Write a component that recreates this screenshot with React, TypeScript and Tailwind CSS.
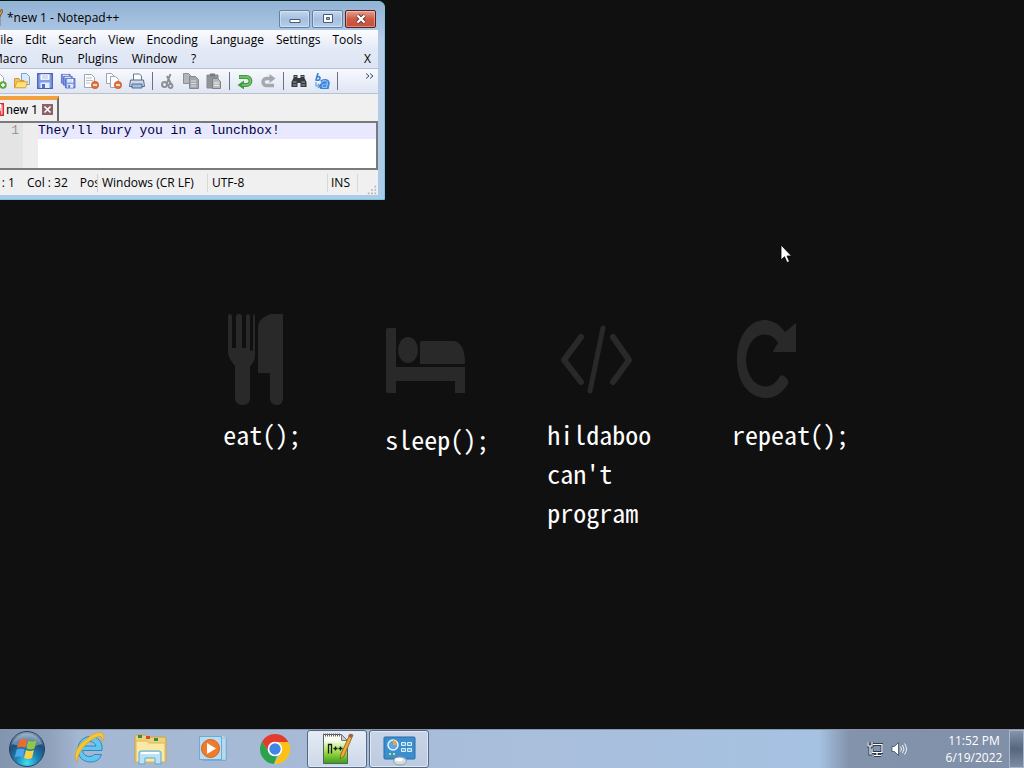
import type { ReactNode } from "react"

const MENU_TOP = ["File", "Edit", "Search", "View", "Encoding", "Language", "Settings", "Tools"]
const MENU_BOTTOM = ["Macro", "Run", "Plugins", "Window", "?"]

const Page = ({ x = 3, y = 1, w = 10, h = 13, fill = "#fdfdfd", stroke = "#9aa6b8" }) =>
    <path d={`M${x + 0.5} ${y + 0.5}h${w - 4}l3 3v${h - 4}h-${w - 1}z`} fill={fill} stroke={stroke} />

const Minus = () => <>
    <circle cx="12" cy="12" r="3.7" fill="#e0703a" stroke="#c4552a" strokeWidth=".6" />
    <path d="M10 12h4" stroke="#fff" strokeWidth="1.5" />
</>

const Floppy = ({ x = 0, y = 0, s = 1 }) => <g transform={`translate(${x} ${y}) scale(${s})`}>
    <path d="M.7.7h14.6v14.6H.7z" fill="#7f9fe8" stroke="#4a62b8" strokeWidth="1.3" />
    <path d="M3.5 1.3h9v5.5h-9z" fill="#fff" />
    <path d="M5 3h6M5 5h6" stroke="#a8b8e0" />
    <path d="M3.5 9.5h9v5.5h-9z" fill="#e8eefc" />
    <path d="M5 11h3v4H5z" fill="#4d70cc" />
</g>

type Tool = { name: string, icon: ReactNode } | null

const TOOLS: Tool[] = [
    { name: "New", icon: <><Page /><circle cx="12" cy="12" r="3.7" fill="#5aa83c" /><path d="M10 12h4M12 10v4" stroke="#fff" strokeWidth="1.4" /></> },
    { name: "Open", icon: <><path d="M7.5.5h5l3 3v8h-8z" fill="#dce9fb" stroke="#7f9ed2" /><path d="M.5 14.5V5.5H5l1 2h4v7z" fill="#f2c455" stroke="#d39a2e" /><path d="M.8 14.8 3 8.7h10.5l-1.8 6.1z" fill="#ffe07c" stroke="#dba438" /></> },
    { name: "Save", icon: <Floppy /> },
    { name: "Save All", icon: <><Floppy x={1} y={1} s={0.6} /><Floppy x={3} y={3} s={0.6} /><Floppy x={5} y={5} s={0.65} /></> },
    { name: "Close", icon: <><Page x={1} w={11} h={14} /><path d="M3 5h6M3 7.5h7M3 10h4" stroke="#b7becb" /><Minus /></> },
    { name: "Close All", icon: <><Page x={0} y={0} w={9} h={11} /><Page x={4} y={3} w={9} h={12} /><Minus /></> },
    { name: "Print", icon: <><path d="M4.5 7V1h6l2 2v4" fill="#fff" stroke="#64799a" /><path d="M1.5 7h13l1 6.5H.5z" fill="#cfd8e5" stroke="#566a8c" /><path d="M3 11h10v4H3z" fill="#9ebfe8" stroke="#566a8c" /></> },
    null,
    { name: "Cut", icon: <><path d="M10.5 1 7 10M7 3l4 8" stroke="#8b8f96" strokeWidth="2" fill="none" /><circle cx="4.5" cy="11.5" r="2.5" fill="none" stroke="#8b8f96" strokeWidth="2" /><circle cx="10.5" cy="13" r="2" fill="none" stroke="#8b8f96" strokeWidth="1.8" /></> },
    { name: "Copy", icon: <><Page x={0} y={0} w={9} h={11} fill="#b4b6ba" stroke="#8b8e94" /><Page x={6} y={3} w={10} h={13} fill="#a4a6ab" stroke="#85888e" /><path d="M8 8h5M8 10.5h5M8 13h5" stroke="#e2e2e4" /></> },
    { name: "Paste", icon: <><path d="M1 2h11v13H1z" fill="#919499" stroke="#85888e" /><path d="M4 .5h5v3H4z" fill="#777a80" /><Page x={6} y={5} w={9} h={11} fill="#b7b9bd" stroke="#7e8187" /><path d="M8 10h5M8 12.5h5" stroke="#eee" /></> },
    null,
    { name: "Undo", icon: <><path d="M2 4h7.500a4 4 0 0 1 0 8H6" fill="none" stroke="#3f9c40" strokeWidth="3.8" /><path d="M7 7.500v9L.5 12z" fill="#3f9c40" /><path d="M2.5 4h7a4 4 0 0 1 0 8H5" fill="none" stroke="#7bc96c" strokeWidth="1.6" /></> },
    { name: "Redo", icon: <><path d="M11 5.500H6.500a3.500 3.500 0 0 0 0 7H14" fill="none" stroke="#a5a7ab" strokeWidth="3.4" /><path d="M9.500 1v9L15.500 5.500z" fill="#a5a7ab" /></> },
    null,
    { name: "Find", icon: <><path d="M2.5 2h4v3h3V2h4v3l2 4v5H9.5v-4h-3v4H.5V9l2-4z" fill="#37393f" /><path d="M3.5 3.5h2M10.5 3.5h2M2 9h3.5M10.5 9H14M2 12h3.5M10.5 12H14" stroke="#a0a5b0" /></> },
    { name: "Replace", icon: <>
        <path d="M4 0 2 7q4 1 4-2 0-2-3-1" fill="none" stroke="#3c81cf" strokeWidth="1.6" />
        <path d="M2 9v4h4M4 11l2 2-2 2" fill="none" stroke="#5ba0e4" strokeWidth="1.2" />
        <path d="M7 9q6-3 7 1l-1 5H8q-3-4 5-4" fill="none" stroke="#3f83d8" strokeWidth="3.600" />
        <path d="M7.500 9q5-3 6 1l-1 4.500H9q-3-3.500 4-3.500" fill="none" stroke="#8dc1f5" strokeWidth="1.200" />
    </> },
    null,
]

const CaptionButton = ({ label, close, children }: { label: string, close?: boolean, children: ReactNode }) =>
    <button aria-label={label} className={`flex h-[18px] w-[31px] items-center justify-center rounded-[2px] border ${close
        ? "border-[#5c1f1c] bg-linear-to-b from-[#e2a08f] via-[#cf5a45] to-[#c4513c]"
        : "border-[#6580a2] bg-linear-to-b from-[#c4d8ee] via-[#a5bfde] to-[#b6cfea]"} shadow-[inset_0_0_0_1px_rgba(255,255,255,0.35)]`}>
        <svg width="14" height="12" viewBox="0 0 14 12" fill="none">{children}</svg>
    </button>

const NotepadWindow = () =>
    <section className="absolute -left-6 top-px flex h-[199px] w-[409px] flex-col rounded-tr-md border border-[#7ec4dc] bg-linear-to-b from-[#93b2d4] via-[#b4cde9] via-20% to-[#a9cce8] px-[6px] pb-1 font-['Open_Sans','Noto_Sans',sans-serif] text-[12px] text-black">
        <header className="flex h-7 shrink-0 items-center pr-[2px]">
            <svg className="ml-1 mt-1" width="16" height="18" viewBox="0 0 16 18">
                <path d="M1 2h12v15H1z" fill="#dff0cf" stroke="#777" />
                <path d="M14.5 0 7 14l-.5 3 2.5-2L16 2z" fill="#d99a36" stroke="#5a4a2a" strokeWidth=".8" />
            </svg>
            <h1 className="mt-1 pl-1 text-[12px]">*new 1 - Notepad++</h1>
            <div className="ml-auto flex gap-[2px] pt-[5px]">
                <CaptionButton label="Minimize"><path d="M2 6.5h10v3H2z" fill="#fff" stroke="#4a5b75" /></CaptionButton>
                <CaptionButton label="Maximize"><path d="M2.5 1.5h9v8h-9z" fill="#fff" stroke="#4a5b75" /><path d="M5.5 4.5h3v2h-3z" fill="#a5bfde" stroke="#4a5b75" /></CaptionButton>
                <CaptionButton label="Close" close><path d="m3.500 2.500 7 7m0-7-7 7" stroke="#5a3538" strokeWidth="4" /><path d="m3.500 2.500 7 7m0-7-7 7" stroke="#fff" strokeWidth="2.4" /></CaptionButton>
            </div>
        </header>

        <div className="flex min-h-0 grow flex-col bg-[#f0f0f0]">
            <nav className="shrink-0 bg-linear-to-b from-[#fbfcfe] via-[#e3e9f6] to-[#dde4f3]">
                <div className="flex h-[19px] items-center gap-3 pl-[11px]">
                    {MENU_TOP.map(item => <button key={item}>{item}</button>)}
                </div>
                <div className="flex h-[19px] items-center gap-[14px] pl-[9px]">
                    {MENU_BOTTOM.map(item => <button key={item}>{item}</button>)}
                    <button className="ml-auto pr-[7px]" aria-label="Close document">X</button>
                </div>
            </nav>

            <div className="flex h-[26px] shrink-0 border-y border-t-[#b4bfd2] border-b-[#b9c1cf] bg-linear-to-b from-[#f7f9fd] to-[#dfe5f2] pl-1">
                {TOOLS.map((tool, i) => tool
                    ? <button key={i} aria-label={tool.name} className="flex w-[23px] items-center justify-center">
                        <svg width="16" height="16" viewBox="0 0 16 16">{tool.icon}</svg>
                    </button>
                    : <span key={i} className="flex w-2 items-center justify-center"><i className="h-[18px] w-px bg-[#66728c]" /></span>)}
                <button aria-label="More tools" className="ml-auto flex pr-1 pt-1">
                    <svg width="9" height="7" viewBox="0 0 9 7" fill="none" stroke="#3d4a66"><path d="m1 .5 3 2.500-3 2.500M5 .5l3 2.500-3 2.500" /></svg>
                </button>
            </div>

            <div className="flex h-[27px] shrink-0 items-end">
                <button className="flex h-[25px] w-[76px] items-center justify-end gap-1 border-r-2 border-t-4 border-r-[#6b6b6b] border-t-[#f0a03c] pr-1 pb-[2px] font-['Roboto',sans-serif] text-[12px]">
                    <svg className="shrink-0" width="12" height="13" viewBox="0 0 12 13"><path d="M.7.7h10.600v11.600H.7z" fill="#f6b5b5" stroke="#d42c36" strokeWidth="1.4" /><path d="M3 1h6v4H3z" fill="#fff" /><path d="M3 8h6v4H3z" fill="#e0424c" /></svg>
                    <span className="-ml-[2px] whitespace-nowrap">new 1</span>
                    <svg className="shrink-0" width="11" height="11" viewBox="0 0 11 11"><path d="M0 0h11v11H0z" fill="#8d6168" /><path d="m2.500 2.500 6 6m0-6-6 6" stroke="#fff" strokeWidth="1.6" /></svg>
                </button>
            </div>

            <div className="flex min-h-0 grow border-2 border-l-0 border-[#7a7a7a] bg-white font-['Liberation_Mono',monospace] text-[13px] leading-4">
                <span className="w-10 shrink-0 bg-[#e4e4e4] pr-1 text-right text-[#989898]">1</span>
                <span className="w-[15px] shrink-0 bg-[#ededed]" />
                <textarea aria-label="Editor" spellCheck={false} defaultValue="They'll bury you in a lunchbox!" className="grow resize-none bg-[linear-gradient(#e8e8ff_16px,#ffffff_16px)] p-0 text-[#000040] outline-none" />
            </div>

            <footer className="flex h-[25px] shrink-0 items-center whitespace-nowrap pt-px">
                <div className="flex w-[115px] justify-end gap-3 overflow-hidden border-r border-[#d0d0d0]">
                    <span>Ln : 1</span>
                    <span>Col : 32</span>
                    <span className="-mr-[3px]">Pos</span>
                </div>
                <span className="w-[110px] border-r border-[#d8d8d8] pl-1">Windows (CR LF)</span>
                <span className="w-[120px] border-r border-[#d8d8d8] pl-1">UTF-8</span>
                <span className="w-[30px] border-r border-[#d8d8d8] pl-[3px]">INS</span>
                <svg className="ml-auto mr-px self-end" width="10" height="10" viewBox="0 0 12 12" fill="#b3b3b3"><path d="M9 1h2v2H9zM9 5h2v2H9zM9 9h2v2H9zM5 5h2v2H5zM5 9h2v2H5zM1 9h2v2H1z" /></svg>
            </footer>
        </div>
    </section>

const STEPS = [
    { text: "eat();", icon: <svg className="ml-1" width="58" height="94" viewBox="0 0 58 94" fill="#292929">
        <path d="M3 1q2 0 2 3v31h4V4q0-3 3-3t3 3v31h4V4q0-3 2-3t2 3v34q5-2 3-1V4q0-3 1-3t1 3v38q0 7-5 11v32q0 7-7 7-8 0-8-7V53Q2 46 1 40V4q0-3 2-3z" />
        <path d="M44 1h12v84q0 7-6 7-7 0-7-7V60H31V15q0-10 13-14z" />
    </svg> },
    { text: "sleep();", icon: <svg className="mt-[14px]" width="82" height="68" viewBox="0 0 82 68" fill="#292929">
        <path d="M1 3q0-2 2-2h8v39h69v26H70V54H11v12H3q-2 0-2-2z" />
        <ellipse cx="23" cy="23" rx="10" ry="13" />
        <path d="M37 14h32q11 2 11 23H35V16q0-2 2-2z" />
    </svg> },
    { text: "hildaboo can't program", icon: <svg className="ml-3 mt-[11px]" width="74" height="72" viewBox="0 0 74 72" fill="none" stroke="#292929" strokeWidth="6" strokeLinecap="round" strokeLinejoin="round">
        <path d="M22 13 5 36l17 22M54 13l16 23-16 22" /><path d="M44 4 31 67" strokeWidth="5" />
    </svg> },
    { text: "repeat();", icon: <svg className="ml-1 mt-[6px]" width="64" height="82" viewBox="0 0 64 82" fill="#292929">
        <path d="M49 13Q41 2 30 1C12 1 1 19 1 41s12 38 29 38q13 0 22-14c2-4-5-11-8-8-9 16-22 11-28 3-8-11-8-27 0-38 8-10 21-8 26 2l-5 8q0 1 1 1h22V4z" />
    </svg> },
]

const Wallpaper = () =>
    <div className="ml-[21.8%] grid w-[62%] grid-cols-[162fr_162fr_185fr_126fr] pt-[313px] font-['Noto_Sans_Mono_CJK_SC','DejaVu_Sans_Mono',monospace] text-[26px] leading-[39px] text-white">
        {STEPS.map(({ text, icon }, i) => <div key={text}>
            <div className={`flex items-start ${i === 1 ? "h-[106px]" : "h-[101px]"}`}>{icon}</div>
            <p className={i === 2 ? "max-w-28" : "whitespace-nowrap"}>{text}</p>
        </div>)}
    </div>

const StartOrb = () => <svg width="38" height="38" viewBox="0 0 38 38">
    <defs>
        <radialGradient id="orb" cx=".5" cy=".9" r=".9"><stop offset="0" stopColor="#3fe0f4" /><stop offset=".35" stopColor="#1c86b8" /><stop offset=".7" stopColor="#1e4d7c" /><stop offset="1" stopColor="#8fa9c4" /></radialGradient>
    </defs>
    <circle cx="19" cy="19" r="17.5" fill="url(#orb)" stroke="#26405f" />
    <path d="M4 14a16 16 0 0 1 30 0q-15 6-30 0z" fill="#fff" opacity=".3" />
    <path d="M12 10q4-2 7 0l-2 8q-4-2-8 0z" fill="#ee6b2d" />
    <path d="M20.500 10.500q4 2 8 0l-2 8q-4 2-8 0z" fill="#92c83e" />
    <path d="M8.700 19.500q4-2 8 0l-2 8q-4-2-8 0z" fill="#4aa7ea" />
    <path d="M18 20q4 2 8 0l-2 8q-4 2-8 0z" fill="#fcd043" />
</svg>

const APPS = [
    { name: "Internet Explorer", icon: <>
        <path d="M11.500 19.500H31C32 11 27 5.500 19.500 5.500S7 11 7 18.500 12 31 19.500 31c6 0 9.500-3 11-7.500H23q-1 2-4 2c-4 0-7-2-7.500-6zm.5-4.500q1.500-4.500 6.500-4.500T25 15z" fill="#62c6f0" stroke="#2581b8" strokeWidth=".9" />
        <path d="M31 2c4 3 1 8-1 9 2-6 0-7-6-4C14 12 7 21 6 31c-5-7 1-17 8-22C21 3 27 0 31 2z" fill="#f4c536" stroke="#d69b22" strokeWidth=".6" />
    </> },
    { name: "Windows Explorer", icon: <>
        <path d="M2 31V6q0-2 2-2h8l2 2h17q2 0 2 2v23z" fill="#eed27a" stroke="#c9a44b" />
        <path d="M5 4h4v3H5zM21 7h4v3h-4z" fill="#378b4b" /><path d="M13 5h4v3h-4z" fill="#d84a2c" />
        <path d="M3 10h11l2 2h16v19H3z" fill="#f9e9a5" stroke="#d9b962" />
        <path d="M6 33V22q0-2 2-2h18q2 0 2 2v11h-6v-6H12v6z" fill="#b9e2f6" stroke="#58a9d2" />
        <path d="M8 22h18" stroke="#fff" strokeWidth="2" />
    </> },
    { name: "Windows Media Player", icon: <>
        <path d="M8 7h23v22H8z" fill="#8dc2e4" stroke="#579ac5" /><path d="M28 5v24M30 6v23" stroke="#dcf2fc" />
        <path d="M4.500 5.500h22v23h-22z" fill="#b8dcf3" stroke="#6eaad2" />
        <circle cx="15.500" cy="17.500" r="9" fill="#ee7c28" stroke="#d86117" /><path d="m12 12 9 5.500-9 5.500z" fill="#fff" />
    </> },
    { name: "Google Chrome", icon: <>
        <path d="M5 10.500a15 15 0 0 1 26.300.5H18a7 7 0 0 0-6.100 10.500z" fill="#e33b2e" />
        <path d="M5 10.500 11.900 21.500A7 7 0 0 0 20 24.700L17 33A15 15 0 0 1 5 10.500z" fill="#2da24c" />
        <path d="M31.300 11a15 15 0 0 1-14.300 22l7.100-11.500A7 7 0 0 0 18 11z" fill="#fbc116" />
        <circle cx="18" cy="18" r="7.300" fill="#fff" /><circle cx="18" cy="18" r="5.700" fill="#4285e8" />
    </> },
    { name: "Notepad++", tone: "bg-linear-to-b from-[#e6ecf5] to-[#cbd7e8]", icon: <>
        <defs><linearGradient id="npp" x2="0" y2="1"><stop offset=".2" stopColor="#fafff4" /><stop offset=".6" stopColor="#a3d94a" /><stop offset="1" stopColor="#369e18" /></linearGradient></defs>
        <path d="M4.500 3.500h18l6 6v23h-24z" fill="url(#npp)" stroke="#596058" /><path d="M22.500 3.500v6h6z" fill="#ccc" stroke="#777" />
        <path d="M4 4h18" stroke="#666" strokeWidth="3" strokeDasharray="1 1" />
        <path d="M9.500 22.500v-9h3v9M14.500 17.500h4M16.500 15.500v4M19.500 17.500h4M21.500 15.500v4" fill="none" stroke="#14200f" strokeWidth="1.300" />
        <path d="m31 3 3 1-9 21-4 3 1-5z" fill="#efab32" stroke="#805b25" strokeWidth=".8" /><path d="m31 3 3 1-2 3-3-2z" fill="#a05c4d" />
    </> },
    { name: "Control Panel", tone: "bg-linear-to-b from-[#c9d5e6] to-[#bccbe1]", icon: <>
        <rect x="3" y="6" width="31" height="22" rx="1" fill="#3b8fce" stroke="#2a6ba6" />
        <circle cx="12" cy="14" r="5" fill="#5aa7e2" stroke="#e5f4ff" strokeWidth="1.5" /><path d="M12 14V9a5 5 0 0 1 4 5z" fill="#f2a13a" />
        <path d="M20.500 11.500h4v3h-4zm6 0h4v3h-4zm-6 6h4v3h-4zm6 0h4v3h-4z" fill="#5fa9e4" stroke="#dceffc" /><path d="M8 23h2m2 0h2" stroke="#bfe569" strokeWidth="2" />
        <ellipse cx="19" cy="30" rx="6.500" ry="4" fill="#d4dce4" stroke="#929fad" /><ellipse cx="18" cy="28.500" rx="4" ry="1.800" fill="#fff" />
    </> },
]

const Taskbar = () =>
    <footer className="flex h-[39px] shrink-0 items-stretch border-t border-[#8797ac] bg-[linear-gradient(90deg,#8394ae_0px,#90a1bb_50px,#a4b7d3_80px,#a9bedb_50%,#a6c2e2_calc(100%-205px),#8393ac_calc(100%-175px),#8090a9_100%)] font-['Open_Sans','Noto_Sans',sans-serif]">
        <button aria-label="Start" className="flex w-[59px] items-center pl-2"><StartOrb /></button>
        <div className="flex gap-[2px]">
            {APPS.map(({ name, icon, tone }) => <button key={name} aria-label={name} className={`flex w-[60px] items-center justify-center ${tone
                ? `rounded-[3px] border border-[#56677f] shadow-[inset_0_0_0_1px_#dfe9f6] ${tone}` : ""}`}>
                <svg width="36" height="36" viewBox="0 0 36 36">{icon}</svg>
            </button>)}
        </div>
        <div className="ml-auto flex items-center">
            <button aria-label="Network" className="px-1">
                <svg width="16" height="16" viewBox="0 0 16 16" fill="none"><path d="M6 3.500h9v8H5V8M10 12v2M7 14.500h7M1 1v4h4V1M3 5v8h2" stroke="#2e3c50" strokeWidth="3" /><path d="M6 3.500h9v8H5V8M10 12v2M7 14.500h7M1 1v4h4V1M3 5v8h2" stroke="#fff" strokeWidth="1.2" /></svg>
            </button>
            <button aria-label="Volume" className="px-1">
                <svg width="16" height="16" viewBox="0 0 16 16" fill="none"><path d="M1 5.500h2.500l4-4v13l-4-4H1z" fill="#fff" stroke="#2e3c50" strokeWidth=".7" /><path d="M9.500 5.500q2 2.500 0 5M11.500 4q3 4 0 8M13.500 2.500q4 5.500 0 11" stroke="#eef3f8" /></svg>
            </button>
            <time className="w-[98px] pl-7 text-center text-[12px] leading-[17px] whitespace-nowrap text-white">
                11:52 PM<br />6/19/2022
            </time>
            <button aria-label="Show desktop" className="h-full w-[15px] border border-[#aab6c7] bg-linear-to-b from-[#8494aa] via-[#56667d] to-[#7c8da5]" />
        </div>
    </footer>

export default function App() {
    return <div className="relative flex h-screen flex-col overflow-hidden bg-[#101010]">
        <main className="min-h-0 grow">
            <Wallpaper />
        </main>
        <NotepadWindow />
        <Taskbar />
        <svg className="absolute left-[780px] top-[244px]" width="13" height="20" viewBox="0 0 13 20">
            <path d="M1 1v15l3.500-3.300L7 18.500l2.500-1L7 12h4.500z" fill="#fff" stroke="#000" strokeWidth=".8" />
        </svg>
    </div>
}
